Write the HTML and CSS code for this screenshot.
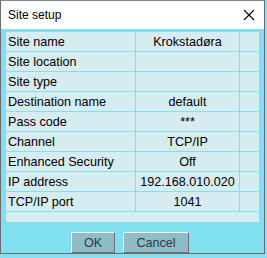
FILE: index.html
```html
<!DOCTYPE html>
<html lang="en">
<head>
    <meta charset="UTF-8">
    <title>Site setup</title>
    <link rel="stylesheet" href="styles.css">
</head>
<body>

    <div class="window">
        <!-- Title bar -->
        <div class="titlebar">
            <span class="title">Site setup</span>
            <svg class="close" width="12" height="12" viewBox="0 0 12 12">
                <path d="M1 1 L11 11 M11 1 L1 11" stroke="#000" stroke-width="1.1" fill="none"/>
            </svg>
        </div>

        <div class="content">
            <div class="panel">
                <table class="grid">
                    <tr><td class="label">Site name</td><td class="value">Krokstadøra</td><td class="spare"></td></tr>
                    <tr><td class="label">Site location</td><td class="value"></td><td class="spare"></td></tr>
                    <tr><td class="label">Site type</td><td class="value"></td><td class="spare"></td></tr>
                    <tr><td class="label">Destination name</td><td class="value">default</td><td class="spare"></td></tr>
                    <tr><td class="label">Pass code</td><td class="value">***</td><td class="spare"></td></tr>
                    <tr><td class="label">Channel</td><td class="value">TCP/IP</td><td class="spare"></td></tr>
                    <tr><td class="label">Enhanced Security</td><td class="value">Off</td><td class="spare"></td></tr>
                    <tr><td class="label">IP address</td><td class="value">192.168.010.020</td><td class="spare"></td></tr>
                    <tr><td class="label">TCP/IP port</td><td class="value">1041</td><td class="spare"></td></tr>
                </table>
            </div>

            <div class="buttons">
                <button class="btn btn-ok">OK</button>
                <button class="btn btn-cancel">Cancel</button>
            </div>
        </div>
    </div>

</body>
</html>
```

FILE: styles.css
```css
body {
    margin: 0;
    padding: 0;
    background-color: #86e0f0;
    font-family: "Liberation Sans", Arial, sans-serif;
    overflow: hidden;
}

.window {
    width: 265px;
    height: 254px;
    box-sizing: border-box;
    border: 1px solid #6c6c6c;
    border-top-color: #7a8a90;
    background-color: #80e0f0;
    display: flex;
    flex-direction: column;
}

.titlebar {
    height: 28px;
    background-color: #fff;
    display: flex;
    align-items: center;
    justify-content: space-between;
    padding: 0 9px 0 7px;
}

.title {
    font-size: 12px;
    color: #000;
}

.close {
    display: block;
}

.content {
    flex: 1;
    display: flex;
    flex-direction: column;
    padding: 3px 5px 0 5px;
}

.panel {
    height: 190px;
    background-color: #d6ecf0;
}

.grid {
    border-collapse: collapse;
    width: 100%;
    font-size: 12.6px;
    color: #000;
}

.grid td {
    height: 19px;
    padding: 0;
    border-right: 1px solid #80e0f0;
    border-bottom: 1px solid #80e0f0;
    white-space: nowrap;
}

.grid .label {
    width: 127px;
    padding-left: 2px;
}

.grid .value {
    width: 103px;
    text-align: center;
}

.grid .spare {
    border-right: none;
}

.buttons {
    display: flex;
    justify-content: center;
    gap: 8px;
    margin-top: 10px;
    padding-right: 5px;
}

.btn {
    height: 21px;
    padding: 0;
    font-family: "Liberation Sans", Arial, sans-serif;
    font-size: 12.6px;
    color: #303848;
    background-color: #8fbdc5;
    border: 1px solid;
    border-color: #fff #707070 #707070 #fff;
}

.btn-ok {
    width: 44px;
}

.btn-cancel {
    width: 66px;
}
```
